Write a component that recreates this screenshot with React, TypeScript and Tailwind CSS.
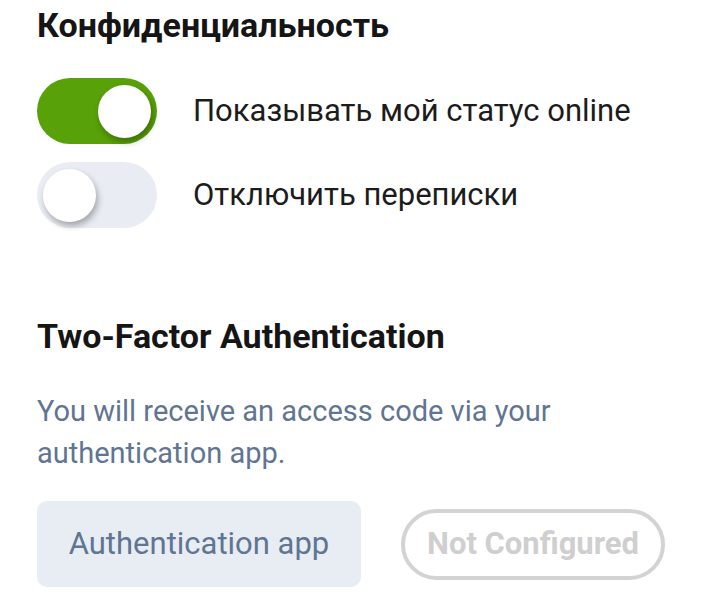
import React from 'react';

const Toggle: React.FC<{ on: boolean }> = ({ on }) => (
  <div
    className={
      'relative flex h-[66px] w-[120px] shrink-0 items-center rounded-full px-[6px] ' +
      (on ? 'justify-end bg-[#58a108]' : 'justify-start bg-[#e9edf3]')
    }
  >
    <div className="h-[53px] w-[53px] rounded-full bg-white shadow-[2px_4px_6px_rgba(0,0,0,0.3)]" />
  </div>
);

export default function App() {
  return (
    <div className="h-[594px] w-[720px] overflow-hidden bg-white pl-[37px] font-['Roboto',sans-serif]">
      <h2 className="pt-[5px] text-[34px] font-bold leading-[40px] text-[#151515]">Конфиденциальность</h2>

      <div className="mt-[33px] flex flex-col gap-[18px]">
        <div className="flex items-center gap-[36px]">
          <Toggle on={true} />
          <span className="text-[31px] text-[#1c1c1c]">Показывать мой статус online</span>
        </div>
        <div className="flex items-center gap-[36px]">
          <Toggle on={false} />
          <span className="text-[31px] text-[#1c1c1c]">Отключить переписки</span>
        </div>
      </div>

      <h2 className="mt-[88px] text-[34px] font-bold leading-[40px] text-[#151515]">Two-Factor Authentication</h2>

      <p className="mt-[34px] w-[580px] text-[29px] leading-[42px] text-[#5f7592]">
        You will receive an access code via your authentication app.
      </p>

      <div className="mt-[27px] flex items-center gap-[40px]">
        <button className="h-[86px] w-[324px] rounded-[10px] bg-[#e8edf3] text-[31px] text-[#5f7592]">
          Authentication app
        </button>
        <div className="flex h-[71px] w-[264px] items-center justify-center rounded-full border-[4px] border-[#d3d3d3] text-[31px] font-bold text-[#cfcfcf]">
          Not Configured
        </div>
      </div>
    </div>
  );
}
